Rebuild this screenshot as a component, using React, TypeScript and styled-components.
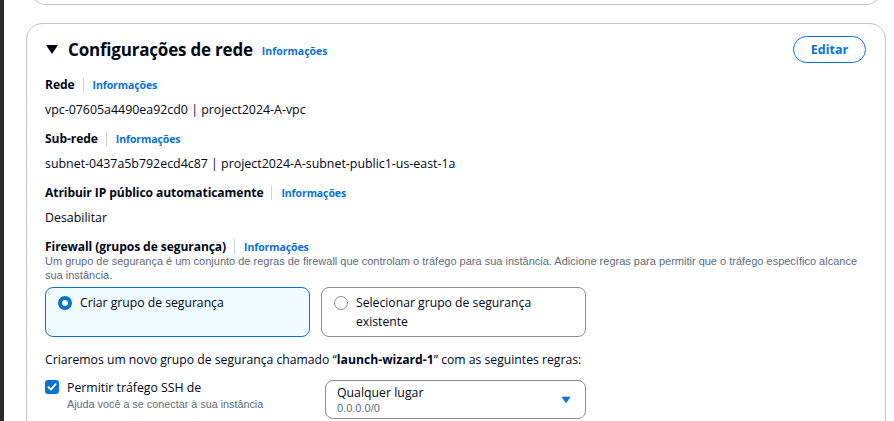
import styled, { createGlobalStyle } from "styled-components";

const Global = createGlobalStyle`
  html, body { margin: 0; padding: 0; background: #ffffff; }
  body {
    font-family: "Open Sans", "Noto Sans", sans-serif;
    color: #000716;
    -webkit-font-smoothing: antialiased;
  }
`;

function App() {
  return (
    <>
      <Global />
      <Page>
        <SideStrip />
        <Main>
          <PrevCard />
          <Card>
            <Header>
              <TitleRow>
                <Caret />
                <h2>Configurações de rede</h2>
                <InfoLink>Informações</InfoLink>
              </TitleRow>
              <EditButton>Editar</EditButton>
            </Header>

            <Field>
              <Label>
                <span>Rede</span>
                <Divider />
                <InfoLink>Informações</InfoLink>
              </Label>
              <Value>vpc-07605a4490ea92cd0 | project2024-A-vpc</Value>
            </Field>

            <Field>
              <Label>
                <span>Sub-rede</span>
                <Divider />
                <InfoLink>Informações</InfoLink>
              </Label>
              <Value>subnet-0437a5b792ecd4c87 | project2024-A-subnet-public1-us-east-1a</Value>
            </Field>

            <Field>
              <Label>
                <span>Atribuir IP público automaticamente</span>
                <Divider />
                <InfoLink>Informações</InfoLink>
              </Label>
              <Value>Desabilitar</Value>
            </Field>

            <Field>
              <Label>
                <span>Firewall (grupos de segurança)</span>
                <Divider />
                <InfoLink>Informações</InfoLink>
              </Label>
              <Description>
                Um grupo de segurança é um conjunto de regras de firewall que controlam o tráfego para sua instância. Adicione regras para permitir que o tráfego específico alcance sua instância.
              </Description>
              <Tiles>
                <Tile $selected>
                  <Radio $checked />
                  <span>Criar grupo de segurança</span>
                </Tile>
                <Tile>
                  <Radio />
                  <span>Selecionar grupo de segurança existente</span>
                </Tile>
              </Tiles>
            </Field>

            <Note>
              Criaremos um novo grupo de segurança chamado “<b>launch-wizard-1</b>” com as seguintes regras:
            </Note>

            <RuleRow>
              <CheckItem>
                <CheckBox>
                  <svg width="10" height="10" viewBox="0 0 10 10">
                    <path d="M1.5 5.2 L4 7.6 L8.6 2.2" fill="none" stroke="#fff" strokeWidth="1.9" strokeLinecap="round" strokeLinejoin="round" />
                  </svg>
                </CheckBox>
                <div>
                  <CheckTitle>Permitir tráfego SSH de</CheckTitle>
                  <CheckHint>Ajuda você a se conectar à sua instância</CheckHint>
                </div>
              </CheckItem>
              <Select>
                <div>
                  <SelectValue>Qualquer lugar</SelectValue>
                  <SelectHint>0.0.0.0/0</SelectHint>
                </div>
                <svg width="10" height="8" viewBox="0 0 10 8">
                  <path d="M0.5 0.8 H9.5 L5 7.2 Z" fill="#0972d3" />
                </svg>
              </Select>
            </RuleRow>
          </Card>
        </Main>
      </Page>
    </>
  );
}

const Page = styled.div`
  display: flex;
  width: 894px;
  height: 421px;
  overflow: hidden;
`;

const SideStrip = styled.div`
  width: 4px;
  flex: none;
  background: #2b2b2b;
`;

const Main = styled.div`
  flex: 1;
  padding: 0 8px 0 22px;
  display: flex;
  flex-direction: column;
`;

const PrevCard = styled.div`
  height: 44px;
  margin: -40px 4px 0 4px;
  border: 1px solid #c6c6cd;
  border-top: none;
  border-radius: 0 0 16px 16px;
  flex: none;
`;

const Card = styled.div`
  margin-top: 18px;
  border: 1px solid #c6c6cd;
  border-radius: 16px;
  padding: 12px 19px 20px 18px;
  display: flex;
  flex-direction: column;
  gap: 8px;
  flex: none;
`;

const Header = styled.div`
  display: flex;
  align-items: center;
  justify-content: space-between;
  margin-bottom: 3px;
`;

const TitleRow = styled.div`
  display: flex;
  align-items: center;
  h2 {
    margin: 0 9px 0 0;
    font-size: 17px;
    font-weight: 700;
    line-height: 26px;
    letter-spacing: -0.2px;
  }
`;

const Caret = styled.span`
  display: inline-block;
  width: 0;
  height: 0;
  margin: 0 10px 0 1px;
  border-left: 6px solid transparent;
  border-right: 6px solid transparent;
  border-top: 9px solid #000716;
`;

const InfoLink = styled.span`
  color: #0972d3;
  font-size: 10.5px;
  font-weight: 700;
  line-height: 16px;
  padding-top: 2px;
`;

const EditButton = styled.button`
  width: 73px;
  height: 27px;
  border: 1px solid #0972d3;
  border-radius: 20px;
  background: #fff;
  color: #0972d3;
  font-family: inherit;
  font-size: 12.5px;
  font-weight: 700;
  padding: 0;
`;

const Field = styled.div`
  display: flex;
  flex-direction: column;
  gap: 6px;
`;

const Label = styled.div`
  display: flex;
  align-items: center;
  height: 20px;
  font-size: 12.1px;
  font-weight: 700;
  letter-spacing: -0.1px;
`;

const Divider = styled.span`
  width: 1px;
  height: 15px;
  background: #d1d5db;
  margin: 0 9px 0 8px;
`;

const Value = styled.div`
  font-size: 12.4px;
  line-height: 20px;
`;

const Description = styled.div`
  margin-top: -8px;
  font-family: "Liberation Sans", Arial, sans-serif;
  font-size: 11px;
  line-height: 14px;
  color: #5f6b7a;
`;

const Tiles = styled.div`
  display: grid;
  grid-template-columns: 265px 265px;
  gap: 11px;
  margin-top: -1px;
`;

const Tile = styled.div<{ $selected?: boolean }>`
  display: flex;
  align-items: flex-start;
  gap: 8px;
  height: 50px;
  box-sizing: border-box;
  padding: 5px 12px;
  border: 1px solid ${(p) => (p.$selected ? "#0972d3" : "#8c8c94")};
  background: ${(p) => (p.$selected ? "#f0fbff" : "#fff")};
  border-radius: 8px;
  font-size: 12.2px;
  line-height: 19px;
  span { max-width: 210px; }
`;

const Radio = styled.span<{ $checked?: boolean }>`
  flex: none;
  width: 14px;
  height: 14px;
  margin-top: 3px;
  box-sizing: border-box;
  border-radius: 50%;
  border: ${(p) => (p.$checked ? "4px solid #0972d3" : "1.5px solid #8c8c94")};
  background: #fff;
`;

const Note = styled.div`
  margin-top: 5px;
  font-size: 12.2px;
  line-height: 20px;
  b { font-weight: 700; }
`;

const RuleRow = styled.div`
  display: grid;
  grid-template-columns: 261px 261px;
  gap: 19px;
  margin-top: 2px;
`;

const CheckItem = styled.div`
  display: flex;
  gap: 8px;
  align-items: flex-start;
`;

const CheckBox = styled.span`
  flex: none;
  width: 14px;
  height: 14px;
  margin-top: 0px;
  border-radius: 3px;
  background: #0972d3;
  display: flex;
  align-items: center;
  justify-content: center;
`;

const CheckTitle = styled.div`
  font-size: 12.3px;
  line-height: 16px;
`;

const CheckHint = styled.div`
  font-family: "Liberation Sans", Arial, sans-serif;
  font-size: 10.8px;
  line-height: 16px;
  color: #5f6b7a;
`;

const Select = styled.div`
  display: flex;
  align-items: center;
  justify-content: space-between;
  height: 39px;
  box-sizing: border-box;
  padding: 0 14px 0 11px;
  border: 1px solid #8c8c94;
  border-radius: 8px;
`;

const SelectValue = styled.div`
  font-size: 12.3px;
  line-height: 16px;
`;

const SelectHint = styled.div`
  font-family: "Liberation Sans", Arial, sans-serif;
  font-size: 11px;
  line-height: 14px;
  color: #5f6b7a;
`;

export default App;
